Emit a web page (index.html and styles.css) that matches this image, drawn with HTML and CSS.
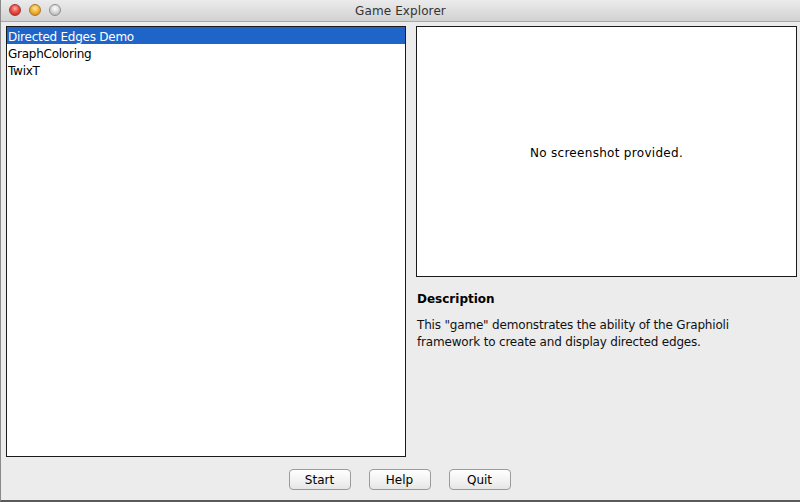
FILE: index.html
```html
<!DOCTYPE html>
<html>
<head>
<meta charset="utf-8">
<title>Game Explorer</title>
<link rel="stylesheet" href="styles.css">
</head>
<body>
<div class="window">
  <div class="titlebar">
    <div class="lights">
      <span class="light red"></span>
      <span class="light yellow"></span>
      <span class="light gray"></span>
    </div>
    <div class="title">Game Explorer</div>
  </div>
  <div class="content">
    <div class="main">
      <ul class="list">
        <li class="item selected">Directed Edges Demo</li>
        <li class="item">GraphColoring</li>
        <li class="item">TwixT</li>
      </ul>
      <div class="side">
        <div class="shot">No screenshot provided.</div>
        <div class="desc-title">Description</div>
        <div class="desc-text">This "game" demonstrates the ability of the Graphioli framework to create and display directed edges.</div>
      </div>
    </div>
    <div class="buttons">
      <button class="btn">Start</button>
      <button class="btn">Help</button>
      <button class="btn">Quit</button>
    </div>
  </div>
</div>
</body>
</html>
```
FILE: styles.css
```css
html, body {
  margin: 0;
  padding: 0;
  background: #ececec;
}
body {
  font-family: "DejaVu Sans", "Liberation Sans", sans-serif;
  font-size: 12px;
  color: #000;
}
.window {
  width: 800px;
  height: 502px;
  box-sizing: border-box;
  display: flex;
  flex-direction: column;
  background: #ececec;
  border-left: 1px solid #8a8a8a;
  border-bottom: 2px solid #5a5a5a;
  overflow: hidden;
}
.titlebar {
  height: 22px;
  flex: none;
  position: relative;
  display: flex;
  align-items: center;
  justify-content: center;
  background: linear-gradient(#ebebeb, #d2d2d2);
  border-bottom: 1px solid #a9a9a9;
  box-sizing: border-box;
}
.lights {
  position: absolute;
  left: 8px;
  top: 4px;
  display: flex;
  gap: 8px;
}
.light {
  width: 12px;
  height: 12px;
  border-radius: 50%;
  box-sizing: border-box;
  display: block;
}
.red {
  background: radial-gradient(circle at 50% 35%, #ffb0a8 0%, #ee4f45 45%, #b3241c 100%);
  border: 1px solid #9a3a33;
}
.yellow {
  background: radial-gradient(circle at 50% 35%, #ffe9a8 0%, #f5b53a 45%, #c3810f 100%);
  border: 1px solid #a7792b;
}
.gray {
  background: radial-gradient(circle at 50% 35%, #ffffff 0%, #d5d5d5 50%, #a8a8a8 100%);
  border: 1px solid #8f8f8f;
}
.title {
  font-size: 12px;
  color: #333;
  letter-spacing: 0.1px;
}
.content {
  flex: 1;
  display: flex;
  flex-direction: column;
  padding: 4px 3px 0 5px;
}
.main {
  display: flex;
  gap: 10px;
  height: 431px;
}
.list {
  margin: 0;
  padding: 0;
  list-style: none;
  width: 400px;
  height: 431px;
  box-sizing: border-box;
  border: 1px solid #1a1a1a;
  background: #fff;
  flex: none;
}
.item {
  height: 15px;
  padding-top: 2px;
  line-height: 17px;
  padding-left: 1px;
  white-space: nowrap;
  letter-spacing: -0.25px;
}
.selected {
  background: #1f64c9;
  color: #fff;
}
.side {
  width: 381px;
  display: flex;
  flex-direction: column;
}
.shot {
  height: 251px;
  box-sizing: border-box;
  border: 1px solid #1a1a1a;
  background: #fff;
  display: flex;
  align-items: center;
  justify-content: center;
  padding-top: 3px;
  letter-spacing: 0.3px;
}
.desc-title {
  font-weight: bold;
  margin-top: 15px;
  padding-left: 1px;
}
.desc-text {
  margin-top: 11px;
  padding-left: 1px;
  padding-right: 40px;
  line-height: 17px;
  color: #111;
  letter-spacing: -0.18px;
}
.buttons {
  display: flex;
  justify-content: center;
  gap: 18px;
  margin-top: 12px;
  padding-right: 4px;
}
.btn {
  width: 62px;
  height: 21px;
  box-sizing: border-box;
  font-family: "DejaVu Sans", "Liberation Sans", sans-serif;
  font-size: 12px;
  color: #000;
  background: linear-gradient(#ffffff, #f1f1f1 60%, #e6e6e6);
  border: 1px solid #9b9b9b;
  border-radius: 4px;
  padding: 0;
}
```
